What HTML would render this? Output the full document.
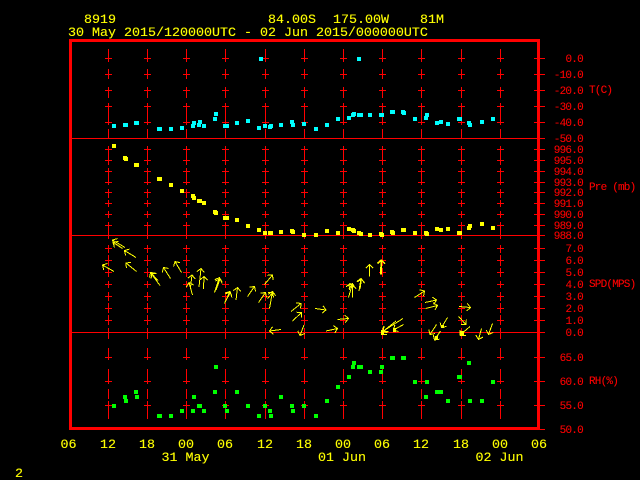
<!DOCTYPE html>
<html><head><meta charset="utf-8"><style>
html,body{margin:0;padding:0;background:#000;width:640px;height:480px;overflow:hidden}
svg{display:block}
text{font-family:"Liberation Mono",monospace}
.y{fill:#ff0;stroke:#ff0;stroke-width:.12px;font-size:13.33px}
.r{fill:#f00;stroke:#f00;stroke-width:.1px;font-size:11px;letter-spacing:-.75px;text-anchor:end}
.l{fill:#f00;stroke:#f00;stroke-width:.1px;font-size:11px;letter-spacing:-.8px}
</style></head><body>
<svg width="640" height="480" viewBox="0 0 640 480" xmlns="http://www.w3.org/2000/svg">
<defs>
<marker id="a" markerUnits="userSpaceOnUse" markerWidth="20" markerHeight="20" refX="10" refY="10" orient="auto" viewBox="0 0 20 20"><path d="M6.500,6.300 L10,10 L6.500,13.700" fill="none" stroke="#ff0" stroke-width="1" shape-rendering="crispEdges"/></marker>
<g id="c">
<path d="M.5 49V62M.5 69V79M.5 87V98M.5 103V125M.5 129V138M.5 146V165M.5 168V185M.5 189V198M.5 200V207M.5 211V218M.5 222V239M.5 245V253M.5 255V266M.5 268V277M.5 281V288M.5 292V301M.5 303V313M.5 315V325M.5 328V339M.5 348V360M.5 369V384M.5 389V399M.5 401V419"/>
<path d="M-3 58.5H4M-3 74.5H4M-3 90.5H4M-3 106.5H4M-3 122.5H4M-3 149.5H4M-3 160.5H4M-3 171.5H4M-3 182.5H4M-3 192.5H4M-3 203.5H4M-3 214.5H4M-3 225.5H4M-3 248.5H4M-3 260.5H4M-3 272.5H4M-3 284.5H4M-3 296.5H4M-3 308.5H4M-3 320.5H4M-3 357.5H4M-3 381.5H4M-3 405.5H4"/>
</g>
</defs>
<rect width="640" height="480" fill="#000"/>
<g stroke="#f00" fill="none" shape-rendering="crispEdges">
<use href="#c" x="108"/><use href="#c" x="147"/><use href="#c" x="186"/><use href="#c" x="225"/><use href="#c" x="265"/><use href="#c" x="304"/><use href="#c" x="343"/><use href="#c" x="382"/><use href="#c" x="421"/><use href="#c" x="461"/><use href="#c" x="500"/>
<path d="M72 138.5H545M72 235.5H545M72 332.5H545"/>
<path d="M534 58.5H545M534 74.5H545M534 90.5H545M534 106.5H545M534 122.5H545M534 149.5H545M534 160.5H545M534 171.5H545M534 182.5H545M534 192.5H545M534 203.5H545M534 214.5H545M534 225.5H545M534 248.5H545M534 260.5H545M534 272.5H545M534 284.5H545M534 296.5H545M534 308.5H545M534 320.5H545M534 357.5H545M534 381.5H545M534 405.5H545M534 429.5H545"/>
<rect x="70.5" y="40.5" width="468" height="388" stroke-width="3"/>
</g>
<path fill="#0ff" shape-rendering="crispEdges" d="M259 57h4v4h-4zM112 124h4v4h-4zM123 123h5v4h-5zM134 121h5v4h-5zM157 127h5v4h-5zM169 127h4v4h-4zM180 126h4v4h-4zM191 124h4v4h-4zM192 121h4v4h-4zM197 123h4v4h-4zM198 120h4v4h-4zM202 124h4v4h-4zM213 117h4v4h-4zM214 112h4v4h-4zM223 124h6v4h-6zM235 121h4v4h-4zM246 119h4v4h-4zM257 126h4v4h-4zM263 124h4v4h-4zM268 125h4v4h-4zM269 124h4v4h-4zM279 123h4v4h-4zM290 120h4v4h-4zM291 123h4v4h-4zM302 122h4v4h-4zM314 127h4v4h-4zM325 123h4v4h-4zM336 117h4v4h-4zM347 116h4v4h-4zM351 113h4v4h-4zM352 112h4v4h-4zM357 113h6v4h-6zM368 113h4v4h-4zM379 113h5v4h-5zM390 110h5v4h-5zM401 110h4v4h-4zM402 111h4v4h-4zM413 117h4v4h-4zM424 116h4v4h-4zM425 113h4v4h-4zM435 121h4v4h-4zM439 120h4v4h-4zM446 122h4v4h-4zM457 117h5v4h-5zM467 121h4v4h-4zM468 123h4v4h-4zM480 120h4v4h-4zM491 117h4v4h-4zM357 57h4v4h-4z"/>
<path fill="#ff0" shape-rendering="crispEdges" d="M112 144h4v4h-4zM123 156h4v4h-4zM124 157h4v4h-4zM134 163h5v4h-5zM157 177h5v4h-5zM169 183h4v4h-4zM180 189h4v4h-4zM191 194h4v4h-4zM192 196h4v4h-4zM197 199h5v4h-5zM202 201h4v4h-4zM213 210h4v4h-4zM214 211h4v4h-4zM223 216h6v4h-6zM235 218h4v4h-4zM246 224h4v4h-4zM257 228h4v4h-4zM263 231h4v4h-4zM268 231h5v4h-5zM279 230h4v4h-4zM290 229h4v4h-4zM291 230h4v4h-4zM302 233h4v4h-4zM314 233h4v4h-4zM325 229h4v4h-4zM336 231h4v4h-4zM347 227h4v4h-4zM351 228h4v4h-4zM352 229h4v4h-4zM357 231h4v4h-4zM359 232h4v4h-4zM368 233h4v4h-4zM379 232h4v4h-4zM380 233h4v4h-4zM390 230h4v4h-4zM391 231h4v4h-4zM401 228h5v4h-5zM413 231h4v4h-4zM424 231h4v4h-4zM425 232h4v4h-4zM435 227h4v4h-4zM439 228h4v4h-4zM446 227h4v4h-4zM457 231h5v4h-5zM467 226h4v4h-4zM468 224h4v4h-4zM480 222h4v4h-4zM491 226h4v4h-4z"/>
<path fill="#0f0" shape-rendering="crispEdges" d="M214 365h4v4h-4zM112 404h4v4h-4zM123 395h4v4h-4zM124 399h4v4h-4zM134 390h4v4h-4zM135 395h4v4h-4zM157 414h5v4h-5zM169 414h4v4h-4zM180 409h4v4h-4zM191 409h4v4h-4zM192 395h4v4h-4zM197 404h5v4h-5zM202 409h4v4h-4zM213 390h4v4h-4zM223 404h4v4h-4zM225 409h4v4h-4zM235 390h4v4h-4zM246 404h4v4h-4zM257 414h4v4h-4zM263 404h4v4h-4zM268 409h4v4h-4zM269 414h4v4h-4zM279 395h4v4h-4zM290 404h4v4h-4zM291 409h4v4h-4zM302 404h4v4h-4zM314 414h4v4h-4zM325 399h4v4h-4zM336 385h4v4h-4zM347 375h4v4h-4zM351 365h4v4h-4zM352 361h4v4h-4zM357 365h6v4h-6zM368 370h4v4h-4zM379 370h4v4h-4zM380 365h4v4h-4zM390 356h5v4h-5zM401 356h5v4h-5zM413 380h4v4h-4zM424 395h4v4h-4zM425 380h4v4h-4zM435 390h8v4h-8zM446 399h4v4h-4zM457 375h5v4h-5zM467 361h4v4h-4zM468 399h4v4h-4zM480 399h4v4h-4zM491 380h4v4h-4z"/>
<g stroke="#ff0" fill="none" shape-rendering="crispEdges">
<path marker-end="url(#a)" d="M114 271.5L102.5 265"/>
<path marker-end="url(#a)" d="M136.5 271.5L126 263"/>
<path marker-end="url(#a)" d="M136 257.5L124.5 250.5"/>
<path marker-end="url(#a)" d="M125 247.5L112.5 240"/>
<path marker-end="url(#a)" d="M122.5 248.5L113.5 242.5"/>
<path marker-end="url(#a)" d="M160 285.5L150.5 272.5"/>
<path marker-end="url(#a)" d="M158 280.5L151.5 273.5"/>
<path marker-end="url(#a)" d="M170.5 278.5L163.5 267.5"/>
<path marker-end="url(#a)" d="M181.5 272.5L175 261.5"/>
<path marker-end="url(#a)" d="M192.5 295L189 282.5"/>
<path marker-end="url(#a)" d="M190.5 287.5L192 275"/>
<path marker-end="url(#a)" d="M199 287L201 268.5"/>
<path marker-end="url(#a)" d="M203.5 289L204 276.5"/>
<path marker-end="url(#a)" d="M214.5 292.5L219.5 277.5"/>
<path marker-end="url(#a)" d="M216 290L220 279"/>
<path marker-end="url(#a)" d="M224.5 303.5L230 291.5"/>
<path marker-end="url(#a)" d="M226 300L230.5 292.5"/>
<path marker-end="url(#a)" d="M236 300L237.5 287.5"/>
<path marker-end="url(#a)" d="M247.5 296.5L254.5 286.5"/>
<path marker-end="url(#a)" d="M258.5 302.5L265.5 292.5"/>
<path marker-end="url(#a)" d="M264.5 284.5L272.5 275"/>
<path marker-end="url(#a)" d="M269.5 308.5L272.5 291.5"/>
<path marker-end="url(#a)" d="M267.5 298.5L273 292.5"/>
<path marker-end="url(#a)" d="M281 329.5L269.5 331"/>
<path marker-end="url(#a)" d="M291 311.5L301 303.5"/>
<path marker-end="url(#a)" d="M292.5 321L301.5 312.5"/>
<path marker-end="url(#a)" d="M304 325L300 335.5"/>
<path marker-end="url(#a)" d="M315 308.5L326 310"/>
<path marker-end="url(#a)" d="M326 331L337.5 328.5"/>
<path marker-end="url(#a)" d="M337.5 319.5L348.5 318.5"/>
<path marker-end="url(#a)" d="M348.5 297.5L352.5 283.5"/>
<path marker-end="url(#a)" d="M349.5 290L350 283.5"/>
<path marker-end="url(#a)" d="M352.5 297.5L352.5 285"/>
<path marker-end="url(#a)" d="M359 291L361 278.5"/>
<path marker-end="url(#a)" d="M360 289L361.5 279"/>
<path marker-end="url(#a)" d="M369.5 276.5L369.5 264.5"/>
<path marker-end="url(#a)" d="M380.5 274.5L381 260"/>
<path marker-end="url(#a)" d="M381.5 274.5L381.5 260"/>
<path marker-end="url(#a)" d="M403 318.5L382.5 331.5"/>
<path marker-end="url(#a)" d="M403.5 324.5L393.5 330"/>
<path marker-end="url(#a)" d="M396 321L383.5 331"/>
<path marker-end="url(#a)" d="M414.5 297.5L424.5 291"/>
<path marker-end="url(#a)" d="M425 302.5L436.5 300"/>
<path marker-end="url(#a)" d="M425.5 308.5L437.5 305.5"/>
<path marker-end="url(#a)" d="M436.5 324.5L430 334.5"/>
<path marker-end="url(#a)" d="M440.5 331L434.5 340"/>
<path marker-end="url(#a)" d="M447.5 317.5L441.5 327.5"/>
<path marker-end="url(#a)" d="M458.5 316.5L466 324.5"/>
<path marker-end="url(#a)" d="M459 306.5L470.5 307.5"/>
<path marker-end="url(#a)" d="M470 326.5L460 335"/>
<path marker-end="url(#a)" d="M481.5 328.5L478.5 339.5"/>
<path marker-end="url(#a)" d="M492.5 323.5L488.5 334.5"/>
</g>
<path fill="#ff0" shape-rendering="crispEdges" d="M381 330h3v5h-3zM384 334h3v1h-3zM393 328h3v4h-3zM460 331h4v5h-4zM464 335h2v1h-2zM435 336h3v4h-3zM441 325h3v3h-3z"/>
<text class="y" x="84" y="23">8919</text>
<text class="y" x="268" y="23">84.00S</text>
<text class="y" x="333" y="23">175.00W</text>
<text class="y" x="420" y="23">81M</text>
<text class="y" x="68" y="36">30 May 2015/120000UTC - 02 Jun 2015/000000UTC</text>
<text class="r" x="583" y="62">0.0</text>
<text class="r" x="583" y="78">-10.0</text>
<text class="r" x="583" y="94">-20.0</text>
<text class="r" x="583" y="110">-30.0</text>
<text class="r" x="583" y="126">-40.0</text>
<text class="r" x="583" y="142">-50.0</text>
<text class="r" x="583" y="153">996.0</text>
<text class="r" x="583" y="164">995.0</text>
<text class="r" x="583" y="175">994.0</text>
<text class="r" x="583" y="186">993.0</text>
<text class="r" x="583" y="196">992.0</text>
<text class="r" x="583" y="207">991.0</text>
<text class="r" x="583" y="218">990.0</text>
<text class="r" x="583" y="229">989.0</text>
<text class="r" x="583" y="239">988.0</text>
<text class="r" x="583" y="252">7.0</text>
<text class="r" x="583" y="264">6.0</text>
<text class="r" x="583" y="276">5.0</text>
<text class="r" x="583" y="288">4.0</text>
<text class="r" x="583" y="300">3.0</text>
<text class="r" x="583" y="312">2.0</text>
<text class="r" x="583" y="324">1.0</text>
<text class="r" x="583" y="336">0.0</text>
<text class="r" x="583" y="361">65.0</text>
<text class="r" x="583" y="385">60.0</text>
<text class="r" x="583" y="409">55.0</text>
<text class="r" x="583" y="433">50.0</text>
<text class="l" x="589" y="93">T(C)</text>
<text class="l" x="589" y="190">Pre (mb)</text>
<text class="l" x="589" y="287">SPD(MPS)</text>
<text class="l" x="589" y="384">RH(%)</text>
<text class="y" x="60.5" y="448">06</text>
<text class="y" x="100" y="448">12</text>
<text class="y" x="139" y="448">18</text>
<text class="y" x="178" y="448">00</text>
<text class="y" x="217" y="448">06</text>
<text class="y" x="257" y="448">12</text>
<text class="y" x="296" y="448">18</text>
<text class="y" x="335" y="448">00</text>
<text class="y" x="374" y="448">06</text>
<text class="y" x="413" y="448">12</text>
<text class="y" x="453" y="448">18</text>
<text class="y" x="492" y="448">00</text>
<text class="y" x="531" y="448">06</text>
<text class="y" x="161.5" y="461">31 May</text>
<text class="y" x="318" y="461">01 Jun</text>
<text class="y" x="475.5" y="461">02 Jun</text>
<text class="y" x="15" y="477">2</text>
</svg>
</body></html>
